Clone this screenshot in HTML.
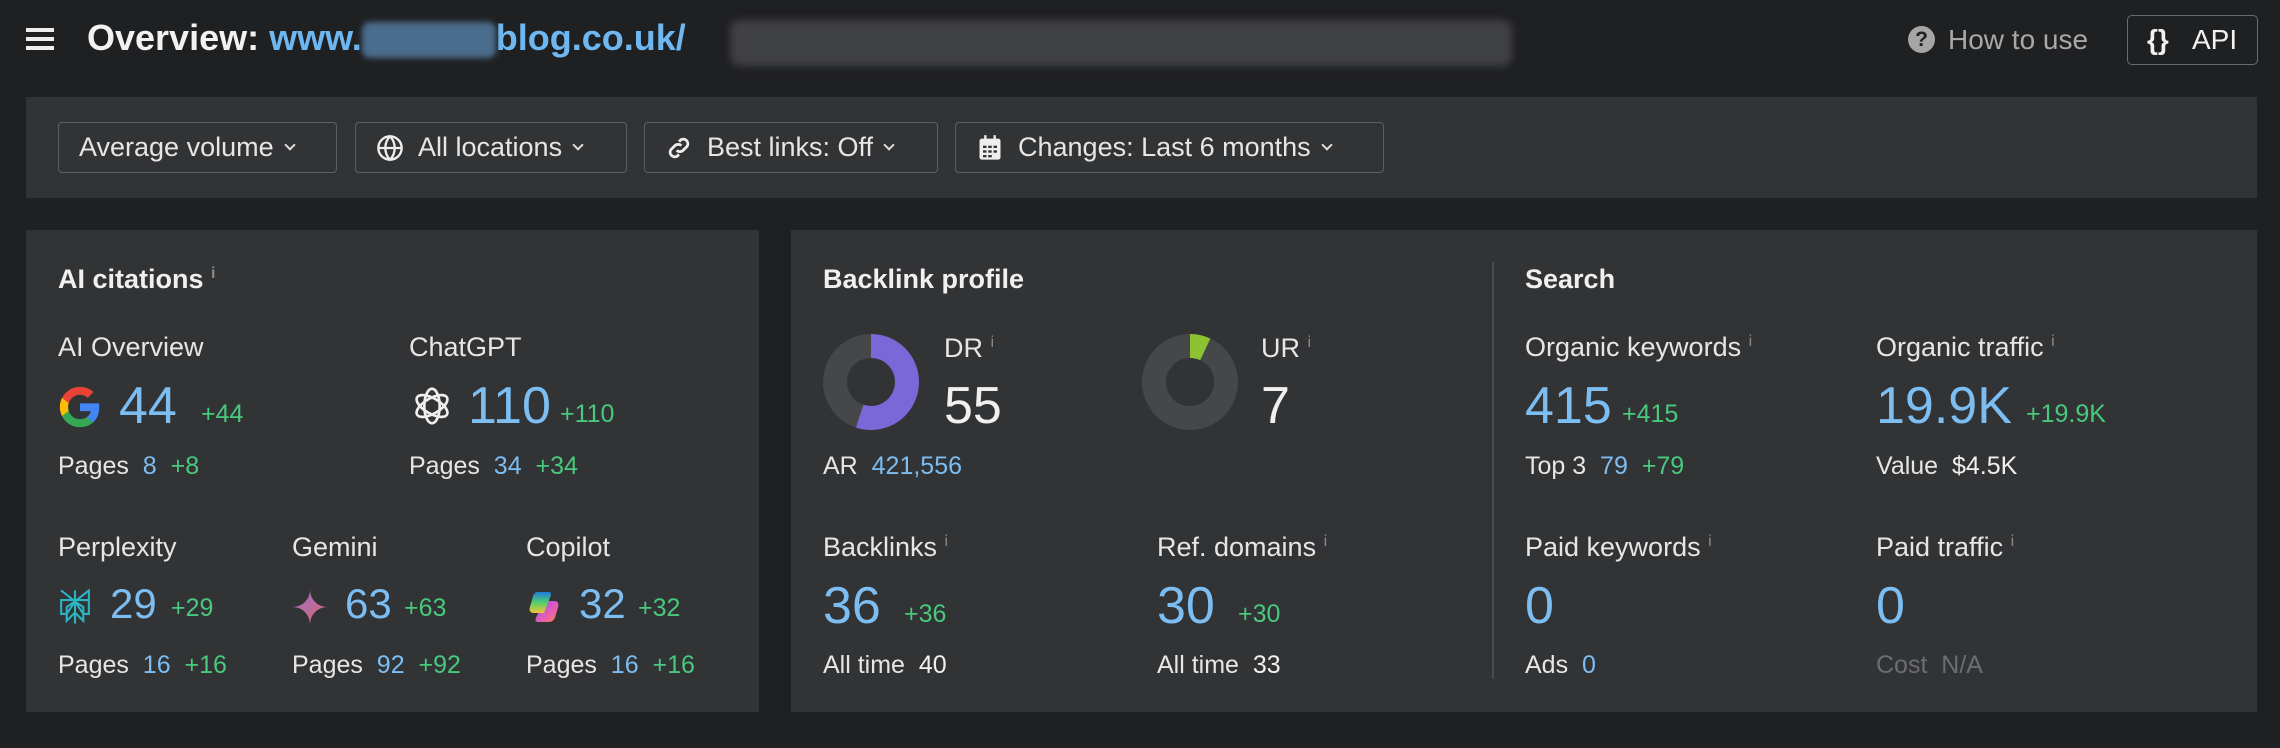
<!DOCTYPE html>
<html><head><meta charset="utf-8"><style>
*{margin:0;padding:0;box-sizing:border-box}
body{width:2280px;height:748px;background:#1f2022;font-family:"Liberation Sans",sans-serif;color:#e6e6e6;position:relative;overflow:hidden}
.a{position:absolute;white-space:nowrap;line-height:1}
.panel{position:absolute;background:#323335}
.btn{position:absolute;top:122px;height:51px;border:1.5px solid #5e5f62;border-radius:4px;font-size:27px;color:#e6e6e6;display:flex;align-items:center;padding-left:20px}
.chev{display:inline-block;width:8px;height:8px;border-right:2px solid #ddd;border-bottom:2px solid #ddd;transform:rotate(45deg);margin-left:12px;margin-top:-6px}
.h{font-size:27px;font-weight:bold;color:#f0f0f0}
.l{font-size:27px;color:#e6e6e6}
.n{font-size:52px;color:#7cbdf2}
.w{color:#f0f0f0}
.d{font-size:25px;color:#48c97d}
.s{font-size:25px;color:#e6e6e6}
.b{color:#7cbdf2}
.g{color:#48c97d}
.i{font-size:16px;color:#8a8a8a;vertical-align:top}
</style></head><body>
<div class="a" style="left:26px;top:28px;width:28px;height:4px;background:#eee;box-shadow:0 9px 0 #eee,0 18px 0 #eee"></div>
<div class="a" style="left:87px;top:20px;font-size:36px;font-weight:bold;color:#f2f2f2">Overview: <span style="color:#6fb7f0">www.<span style="display:inline-block;width:134px;height:36px;background:#4a6d8e;border-radius:8px;vertical-align:middle;filter:blur(3px)"></span>blog.co.uk/</span></div>
<div class="a" style="left:730px;top:20px;width:782px;height:46px;background:#404143;border-radius:10px;filter:blur(4px)"></div>
<div class="a" style="left:1908px;top:26px;width:27px;height:27px;border-radius:50%;background:#a5a5a5;color:#1f2022;font-size:21px;font-weight:bold;text-align:center;line-height:27px">?</div>
<div class="a" style="left:1948px;top:26px;font-size:28px;color:#a8a8a8">How to use</div>
<div class="a" style="left:2127px;top:15px;width:131px;height:50px;border:1.5px solid #6a6b6e;border-radius:5px"></div>
<div class="a" style="left:2147px;top:26px;font-size:28px;font-weight:bold;color:#f2f2f2">{}</div>
<div class="a" style="left:2192px;top:26px;font-size:28px;color:#f2f2f2">API</div>

<div class="panel" style="left:26px;top:97px;width:2231px;height:101px"></div>
<div class="btn" style="left:58px;width:279px">Average volume<span class="chev"></span></div>
<div class="btn" style="left:355px;width:272px"><svg width="28" height="28" viewBox="0 0 24 24" fill="none" stroke="#eee" stroke-width="2" style="margin-right:14px"><circle cx="12" cy="12" r="10"/><path d="M2 12h20M12 2c3 3 4 6.5 4 10s-1 7-4 10c-3-3-4-6.5-4-10s1-7 4-10z"/></svg>All locations<span class="chev"></span></div>
<div class="btn" style="left:644px;width:294px"><svg width="28" height="28" viewBox="0 0 24 24" fill="none" stroke="#eee" stroke-width="2.4" style="margin-right:14px"><path d="M10 14a4 4 0 0 0 5.5 0l3.5-3.5a4 4 0 0 0-5.5-5.5L12 6.5M14 10a4 4 0 0 0-5.5 0L5 13.5a4 4 0 0 0 5.5 5.5L12 17.5"/></svg>Best links: Off<span class="chev"></span></div>
<div class="btn" style="left:955px;width:429px"><svg width="28" height="28" viewBox="0 0 24 24" style="margin-right:14px"><rect x="3" y="4" width="18" height="18" rx="2" fill="#eee"/><rect x="7" y="1" width="2" height="5" fill="#eee"/><rect x="15" y="1" width="2" height="5" fill="#eee"/><g fill="#333"><rect x="6" y="10" width="3" height="2"/><rect x="10.5" y="10" width="3" height="2"/><rect x="15" y="10" width="3" height="2"/><rect x="6" y="14" width="3" height="2"/><rect x="10.5" y="14" width="3" height="2"/><rect x="15" y="14" width="3" height="2"/><rect x="6" y="18" width="3" height="2"/><rect x="10.5" y="18" width="3" height="2"/></g></svg>Changes: Last 6 months<span class="chev"></span></div>

<div class="panel" style="left:26px;top:230px;width:733px;height:482px"></div>
<div class="panel" style="left:791px;top:230px;width:1466px;height:482px"></div>

<div class="a h" style="left:58px;top:266px">AI citations <span class="i">i</span></div>
<div class="a l" style="left:58px;top:334px">AI Overview</div>
<div class="a l" style="left:409px;top:334px">ChatGPT</div>
<svg class="a" style="left:58px;top:385px" width="44" height="44" viewBox="0 0 48 48"><path fill="#4285F4" d="M45 24.5c0-1.6-.1-3.1-.4-4.5H24v8.5h11.8c-.5 2.7-2.1 5-4.4 6.6v5.5h7.1c4.2-3.8 6.5-9.5 6.5-16.1z"/><path fill="#34A853" d="M24 46c5.9 0 10.9-2 14.5-5.3l-7.1-5.5c-2 1.3-4.5 2.1-7.400 2.1-5.7 0-10.6-3.9-12.3-9.1H4.4v5.7C8 41 15.4 46 24 46z"/><path fill="#FBBC05" d="M11.7 28.2c-.4-1.3-.7-2.7-.7-4.2s.3-2.9.7-4.2v-5.7H4.4C2.9 17.1 2 20.4 2 24s.9 6.9 2.4 9.900l7.3-5.7z"/><path fill="#EA4335" d="M24 10.7c3.2 0 6.1 1.1 8.4 3.3l6.3-6.3C34.9 4.1 29.9 2 24 2 15.4 2 8 7 4.4 14.1l7.3 5.7c1.7-5.2 6.6-9.1 12.3-9.1z"/></svg>
<div class="a n" style="left:119px;top:380px">44</div><div class="a d" style="left:201px;top:402px">+44</div>
<svg class="a" style="left:409px;top:383px" width="46" height="46" viewBox="0 0 24 24" fill="none" stroke="#eee" stroke-width="1.4"><g transform="translate(12 12)"><ellipse rx="4" ry="9"/><ellipse rx="4" ry="9" transform="rotate(60)"/><ellipse rx="4" ry="9" transform="rotate(120)"/></g></svg>
<div class="a n" style="left:468px;top:380px">110</div><div class="a d" style="left:560px;top:402px">+110</div>
<div class="a s" style="left:58px;top:454px">Pages <span class="b">&nbsp;8</span> <span class="g">&nbsp;+8</span></div>
<div class="a s" style="left:409px;top:454px">Pages <span class="b">&nbsp;34</span> <span class="g">&nbsp;+34</span></div>

<div class="a l" style="left:58px;top:534px">Perplexity</div>
<div class="a l" style="left:292px;top:534px">Gemini</div>
<div class="a l" style="left:526px;top:534px">Copilot</div>
<svg class="a" style="left:58px;top:589px" width="34" height="36" viewBox="0 0 24 26" fill="none" stroke="#2bb5c4" stroke-width="1.5"><path d="M2 1l10 8 10-8v7M12 1v24M2 8h20v10h-4l-6-9-6 9H2zM6 13l6-4 6 4v10l-6-6-6 6z"/></svg>
<div class="a n" style="left:110px;top:583px;font-size:42px">29</div><div class="a d" style="left:171px;top:596px">+29</div>
<svg class="a" style="left:292px;top:589px" width="36" height="36" viewBox="0 0 24 24"><defs><linearGradient id="gm" x1="0" y1="0" x2="1" y2="1"><stop offset="0" stop-color="#9b72cb"/><stop offset="1" stop-color="#d96570"/></linearGradient></defs><path fill="url(#gm)" d="M12 0C12 7 17 12 24 12 17 12 12 17 12 24 12 17 7 12 0 12 7 12 12 7 12 0z"/></svg>
<div class="a n" style="left:345px;top:583px;font-size:42px">63</div><div class="a d" style="left:404px;top:596px">+63</div>
<svg class="a" style="left:526px;top:589px" width="36" height="36" viewBox="0 0 24 24"><defs><linearGradient id="c1" x1="0" y1="0" x2="0" y2="1"><stop offset="0" stop-color="#1f7ae0"/><stop offset=".5" stop-color="#4fd06a"/><stop offset="1" stop-color="#f5c23a"/></linearGradient><linearGradient id="c2" x1="0" y1="0" x2="1" y2="1"><stop offset="0" stop-color="#8a5cf0"/><stop offset=".6" stop-color="#e85bb4"/><stop offset="1" stop-color="#f58a4a"/></linearGradient></defs><path fill="url(#c2)" d="M12 8h7c2 0 3 1.5 2.5 3.5l-2 7c-.6 2-2 3.5-4.5 3.5H8c-1.5 0-2-1-1.500-2.500z"/><path fill="url(#c1)" d="M8 2h7c1.5 0 2 1 1.5 2.5L12 16H5c-2 0-3-1.500-2.500-3.500l2-7C5 3.500 6 2 8 2z"/></svg>
<div class="a n" style="left:579px;top:583px;font-size:42px">32</div><div class="a d" style="left:638px;top:596px">+32</div>
<div class="a s" style="left:58px;top:653px">Pages <span class="b">&nbsp;16</span> <span class="g">&nbsp;+16</span></div>
<div class="a s" style="left:292px;top:653px">Pages <span class="b">&nbsp;92</span> <span class="g">&nbsp;+92</span></div>
<div class="a s" style="left:526px;top:653px">Pages <span class="b">&nbsp;16</span> <span class="g">&nbsp;+16</span></div>

<div class="a h" style="left:823px;top:266px">Backlink profile</div>
<div class="a" style="left:1492px;top:262px;width:1.5px;height:417px;background:#4a4b4e"></div>
<div class="a h" style="left:1525px;top:266px">Search</div>

<svg class="a" style="left:823px;top:334px" width="96" height="96" viewBox="0 0 96 96"><circle cx="48" cy="48" r="36" fill="none" stroke="#464749" stroke-width="24"/><circle cx="48" cy="48" r="36" fill="none" stroke="#7b68d8" stroke-width="24" stroke-dasharray="124.4 300" transform="rotate(-90 48 48)"/></svg>
<div class="a l" style="left:944px;top:335px">DR <span class="i">i</span></div>
<div class="a n w" style="left:944px;top:380px">55</div>
<svg class="a" style="left:1142px;top:334px" width="96" height="96" viewBox="0 0 96 96"><circle cx="48" cy="48" r="36" fill="none" stroke="#464749" stroke-width="24"/><circle cx="48" cy="48" r="36" fill="none" stroke="#8dc232" stroke-width="24" stroke-dasharray="15.8 300" transform="rotate(-90 48 48)"/></svg>
<div class="a l" style="left:1261px;top:335px">UR <span class="i">i</span></div>
<div class="a n w" style="left:1261px;top:380px">7</div>
<div class="a s" style="left:823px;top:454px">AR <span class="b">&nbsp;421,556</span></div>

<div class="a l" style="left:823px;top:534px">Backlinks <span class="i">i</span></div>
<div class="a l" style="left:1157px;top:534px">Ref. domains <span class="i">i</span></div>
<div class="a n" style="left:823px;top:580px">36</div><div class="a d" style="left:904px;top:602px">+36</div>
<div class="a n" style="left:1157px;top:580px">30</div><div class="a d" style="left:1238px;top:602px">+30</div>
<div class="a s" style="left:823px;top:653px">All time <span class="w">&nbsp;40</span></div>
<div class="a s" style="left:1157px;top:653px">All time <span class="w">&nbsp;33</span></div>

<div class="a l" style="left:1525px;top:334px">Organic keywords <span class="i">i</span></div>
<div class="a l" style="left:1876px;top:334px">Organic traffic <span class="i">i</span></div>
<div class="a n" style="left:1525px;top:380px">415</div><div class="a d" style="left:1622px;top:402px">+415</div>
<div class="a n" style="left:1876px;top:380px">19.9K</div><div class="a d" style="left:2026px;top:402px">+19.9K</div>
<div class="a s" style="left:1525px;top:454px">Top 3 <span class="b">&nbsp;79</span> <span class="g">&nbsp;+79</span></div>
<div class="a s" style="left:1876px;top:454px">Value <span class="w">&nbsp;$4.5K</span></div>

<div class="a l" style="left:1525px;top:534px">Paid keywords <span class="i">i</span></div>
<div class="a l" style="left:1876px;top:534px">Paid traffic <span class="i">i</span></div>
<div class="a n" style="left:1525px;top:580px">0</div>
<div class="a n" style="left:1876px;top:580px">0</div>
<div class="a s" style="left:1525px;top:653px">Ads <span class="b">&nbsp;0</span></div>
<div class="a s" style="left:1876px;top:653px;color:#6c6d70">Cost &nbsp;N/A</div>
</body></html>
